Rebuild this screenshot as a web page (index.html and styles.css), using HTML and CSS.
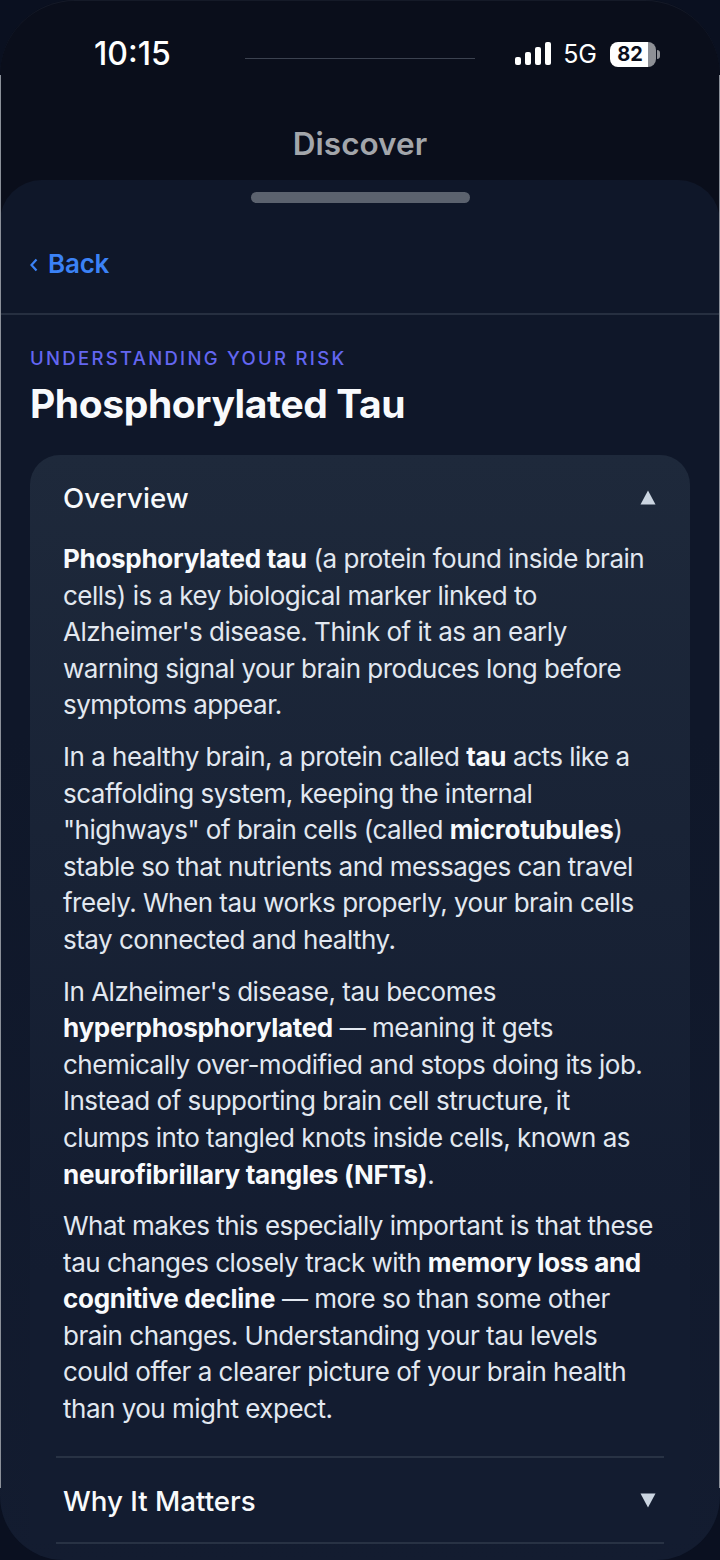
FILE: index.html
```html
<!DOCTYPE html>
<html lang="en">
<head>
  <meta charset="UTF-8">
  <title>Discover</title>
  <link rel="stylesheet" href="styles.css">
</head>
<body>
  <div class="phone">
    <div class="status">
      <span class="time">10:15</span>
      <div class="island"></div>
      <div class="status-right">
        <svg class="signal" width="36" height="23" viewBox="0 0 36 23">
          <rect x="0" y="15" width="6" height="8" rx="2"/>
          <rect x="10" y="10" width="6" height="13" rx="2"/>
          <rect x="20" y="5" width="6" height="18" rx="2"/>
          <rect x="30" y="0" width="6" height="23" rx="2"/>
        </svg>
        <span class="net">5G</span>
        <div class="battery"><span class="level">82</span></div>
      </div>
    </div>
    <div class="top-title">Discover</div>

    <div class="sheet">
      <div class="grabber"></div>
      <div class="back-row">
        <a class="back" href="#">
          <svg class="chev" width="8" height="14" viewBox="0 0 8 14"><path d="M6.5 1.5 1.5 7l5 5.5"/></svg>
          <span>Back</span>
        </a>
      </div>
      <div class="content">
        <div class="eyebrow">UNDERSTANDING YOUR RISK</div>
        <h1>Phosphorylated Tau</h1>
        <div class="card">
          <div class="acc-head open">
            <span>Overview</span>
            <svg class="arrow" width="16" height="15" viewBox="0 0 16 15"><path d="M8 0.5 15.5 14.5H.5Z"/></svg>
          </div>
          <div class="acc-body">
            <p><b>Phosphorylated tau</b> (a protein found inside brain cells) is a key biological marker linked to Alzheimer's disease. Think of it as an early warning signal your brain produces long before symptoms appear.</p>
            <p>In a healthy brain, a protein called <b>tau</b> acts like a scaffolding system, keeping the internal "highways" of brain cells (called <b>microtubules</b>) stable so that nutrients and messages can travel freely. When tau works properly, your brain cells stay connected and healthy.</p>
            <p>In Alzheimer's disease, tau becomes <b>hyperphosphorylated</b> — meaning it gets chemically over-modified and stops doing its job. Instead of supporting brain cell structure, it clumps into tangled knots inside cells, known as <b>neurofibrillary tangles (NFTs)</b>.</p>
            <p>What makes this especially important is that these tau changes closely track with <b>memory loss and cognitive decline</b> — more so than some other brain changes. Understanding your tau levels could offer a clearer picture of your brain health than you might expect.</p>
          </div>
          <div class="acc-head closed">
            <span>Why It Matters</span>
            <svg class="arrow" width="16" height="15" viewBox="0 0 16 15"><path d="M.5 .5H15.5L8 14.5Z"/></svg>
          </div>
        </div>
      </div>
    </div>
    <div class="bezel"></div>
    <div class="edge left"></div>
    <div class="edge right"></div>
  </div>
</body>
</html>
```

FILE: styles.css
```css
* {
  box-sizing: border-box;
}
html, body {
  margin: 0;
  height: 100%;
  background: #0a0e1b;
}
body {
  font-family: Inter, 'Noto Sans', sans-serif;
  overflow: hidden;
}
.phone {
  position: relative;
  width: 720px;
  height: 1560px;
  overflow: hidden;
  background: #0a0e1b;
  display: flex;
  flex-direction: column;
}
.status {
  height: 108px;
  padding: 33px 63px 0 94px;
  display: flex;
  align-items: flex-start;
  color: #fff;
}
.time {
  width: 151px;
  font-size: 32px;
  font-weight: 500;
  line-height: 42px;
}
.island {
  width: 230px;
  height: 1px;
  margin-top: 25px;
  background: #3c4250;
}
.status-right {
  margin-left: auto;
  display: flex;
  align-items: center;
  height: 42px;
}
.signal {
  fill: #fff;
  margin-right: 12px;
  margin-top: -2px;
}
.net {
  font-size: 25px;
  font-weight: 400;
  margin-right: 13px;
}
.battery {
  position: relative;
  width: 46px;
  height: 25px;
  border-radius: 8px;
  background: linear-gradient(90deg, #fff 83%, #8e9096 83%);
  margin-right: 1px;
}
.battery::after {
  content: "";
  position: absolute;
  right: -4px;
  top: 8px;
  width: 3px;
  height: 9px;
  border-radius: 0 3px 3px 0;
  background: #8e9096;
}
.level {
  display: block;
  width: 38px;
  padding-left: 2px;
  text-align: center;
  font-size: 20px;
  font-weight: 700;
  line-height: 25px;
  color: #0a0e1b;
}
.top-title {
  height: 72px;
  text-align: center;
  font-size: 31.5px;
  font-weight: 600;
  line-height: 72px;
  color: #a3a6ab;
}
.sheet {
  flex: 1;
  min-height: 0;
  border-radius: 42px 42px 0 0;
  background: linear-gradient(180deg, #0f1729 0%, #0f1729 40%, #131c30 100%);
  overflow: hidden;
}
.grabber {
  width: 219px;
  height: 11px;
  margin: 12px auto 0;
  border-radius: 6px;
  background: #5b626e;
}
.back-row {
  height: 112px;
  padding: 10px 30px 0;
  display: flex;
  align-items: center;
  border-bottom: 2px solid #262f40;
}
.back {
  display: flex;
  align-items: center;
  gap: 10px;
  color: #3b82f6;
  font-size: 26px;
  font-weight: 600;
  letter-spacing: -0.2px;
  text-decoration: none;
}
.chev {
  fill: none;
  stroke: #3b82f6;
  stroke-width: 2.2;
  margin-top: 3px;
}
.content {
  padding: 30px 30px 0;
}
.eyebrow {
  color: #6366f1;
  font-size: 18.5px;
  font-weight: 500;
  letter-spacing: 2.3px;
  line-height: 26px;
}
h1 {
  margin: 9px 0 27px;
  color: #f8fafc;
  font-size: 39px;
  font-weight: 700;
  letter-spacing: -0.4px;
  line-height: 48px;
}
.card {
  border-radius: 30px 30px 0 0;
  background: linear-gradient(180deg, #1e293b 0%, #131c30 75%);
  padding: 0 26px;
  color: #f1f5f9;
}
.acc-head {
  display: flex;
  align-items: center;
  justify-content: space-between;
  padding: 0 7px;
  font-size: 27.7px;
  font-weight: 500;
  color: #f8fafc;
}
.acc-head.open {
  height: 85px;
}
.acc-head.closed {
  height: 88px;
  padding-top: 2px;
  border-top: 2px solid #283244;
  border-bottom: 2px solid #283244;
}
.arrow {
  fill: #cbd5e1;
  margin-right: 1px;
}
.acc-body {
  padding: 1px 7px 28px;
  font-size: 26px;
  letter-spacing: -0.5px;
  line-height: 36.6px;
  color: #e2e8f0;
}
.acc-body p {
  margin: 0 0 15px;
}
.acc-body p:last-child {
  margin-bottom: 0;
}
.acc-body b {
  font-weight: 700;
  letter-spacing: -0.3px;
  color: #f8fafc;
}
/* device outline sits over the page */
.bezel {
  position: absolute;
  inset: 0;
  border-radius: 75px 75px 64px 64px;
  border-top: 1px solid #151a28;
  box-shadow: 0 0 0 40px #0a1020;
  pointer-events: none;
}
.edge {
  position: absolute;
  top: 75px;
  width: 1px;
  height: 1413px;
  background: #8b9099;
}
.edge.left {
  left: 0;
}
.edge.right {
  right: 0;
}
```
